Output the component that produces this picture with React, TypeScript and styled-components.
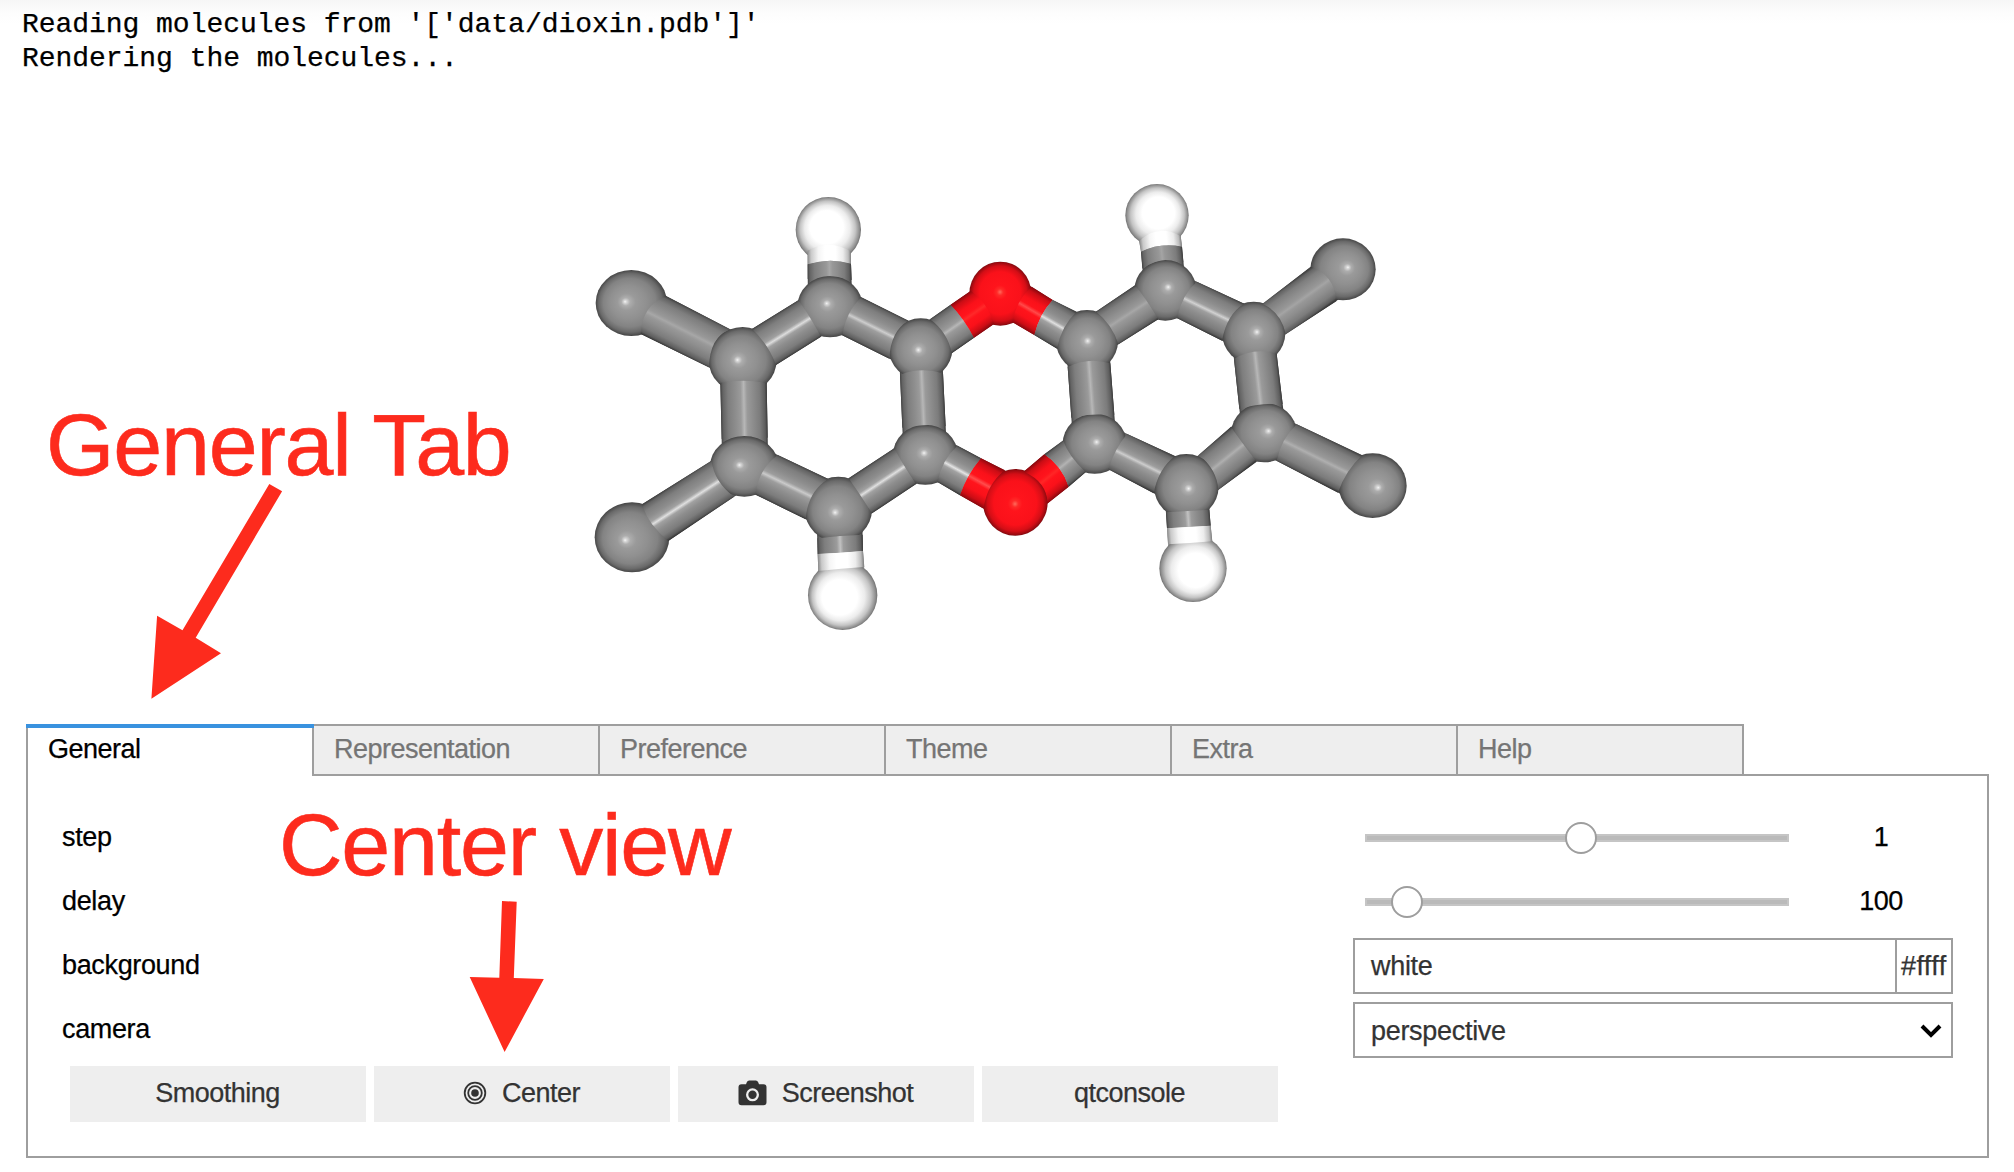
import React from "react";
import styled, { createGlobalStyle } from "styled-components";

const GlobalStyle = createGlobalStyle`
  *, *::before, *::after { box-sizing: border-box; }
  body {
    margin: 0;
    background: #fff;
    color: #000;
    font-family: "Liberation Sans", Arial, sans-serif;
    font-size: 27px;
    letter-spacing: -0.5px;
    -webkit-text-stroke-width: 0.25px;
    overflow: hidden;
  }
`;

const Page = styled.main`
  position: relative;
  width: 2014px;
  height: 1172px;
  display: flex;
  flex-direction: column;
  background: linear-gradient(#f6f6f6, #fdfdfd 14px, #fff 24px);
`;

const Output = styled.pre`
  margin: 0;
  height: 90px;
  padding: 8px 0 0 22px;
  font: 28px/34px "Liberation Mono", "Courier New", monospace;
  letter-spacing: -0.04px;
`;

const Viewer = styled.div`
  height: 634px;
`;

const Canvas = styled.svg`
  display: block;
`;

const Controls = styled.section`
  width: 1963px;
  margin-left: 26px;
`;

const TabBar = styled.div`
  display: flex;
  height: 50px;
`;

const Tab = styled.button<{ $active?: boolean }>`
  position: relative;
  z-index: ${(p) => (p.$active ? 1 : 0)};
  width: ${(p) => (p.$active ? 286 : 288)}px;
  height: ${(p) => (p.$active ? 52 : 50)}px;
  margin: 0 ${(p) => (p.$active ? 0 : -2)}px 0 0;
  padding: 0 0 ${(p) => (p.$active ? 4 : 2)}px 20px;
  border: 2px solid #9e9e9e;
  border-bottom: 0;
  border-right-width: ${(p) => (p.$active ? 0 : 2)}px;
  background: ${(p) => (p.$active ? "#fff" : "#eee")};
  color: ${(p) => (p.$active ? "#000" : "#757575")};
  font: inherit;
  letter-spacing: inherit;
  text-align: left;

  &::before {
    content: "";
    display: ${(p) => (p.$active ? "block" : "none")};
    position: absolute;
    top: -2px;
    left: -2px;
    width: 288px;
    height: 4px;
    background: #3992df;
  }
`;

const Panel = styled.div`
  height: 384px;
  border: 2px solid #9e9e9e;
  padding: 34px 34px 0;
`;

const Row = styled.div`
  display: flex;
  justify-content: space-between;
  height: 56px;
  margin-bottom: 8px;
`;

const Label = styled.label`
  line-height: 54px;
  letter-spacing: -0.35px;
`;

const Field = styled.div`
  display: flex;
  align-items: center;
  width: 600px;
`;

const Track = styled.div`
  flex: none;
  width: 424px;
  height: 8px;
  margin-left: 12px;
  border: 2px solid #c5c5c5;
  background: #bababa;
`;

const Thumb = styled.div`
  width: 32px;
  height: 32px;
  margin-top: -14px;
  border: 2px solid #9e9e9e;
  border-radius: 50%;
  background: #fff;
`;

const Readout = styled.span`
  flex: none;
  width: 144px;
  margin-left: 20px;
  line-height: 54px;
  padding-bottom: 2px;
  text-align: center;
`;

const Box = styled.div<{ $drop?: number }>`
  display: flex;
  align-items: center;
  justify-content: space-between;
  flex: 1;
  height: 56px;
  padding: ${(p) => p.$drop ?? 0}px 9px 0 16px;
  border: 2px solid #9e9e9e;
  color: #333;
  line-height: 50px;
  letter-spacing: -0.3px;
`;

const Swatch = styled.div`
  width: 56px;
  height: 56px;
  padding: 0 4px;
  border: 2px solid #9e9e9e;
  border-left: 0;
  color: #333;
  line-height: 53px;
  letter-spacing: 0.4px;
  white-space: nowrap;
`;

const Buttons = styled.div`
  display: flex;
  gap: 8px;
  padding-left: 8px;
`;

const Button = styled.button`
  display: flex;
  align-items: center;
  justify-content: center;
  width: 296px;
  height: 56px;
  padding: 0 1px 2px 0;
  border: 0;
  background: #eee;
  color: #333;
  font: inherit;
  letter-spacing: inherit;
`;

const Icon = styled.svg`
  display: block;
  margin-right: 15px;
`;

const Chevron = styled.svg`
  display: block;
`;

const Note = styled.span<{ $x: number; $y: number }>`
  position: absolute;
  left: ${(p) => p.$x}px;
  top: ${(p) => p.$y}px;
  color: #fd2b1d;
  font-size: 88px;
  letter-spacing: -1.2px;
  line-height: 100px;
  white-space: nowrap;
  -webkit-text-stroke-width: 0.6px;
`;

const Arrows = styled.svg`
  position: absolute;
  left: 0;
  top: 0;
  pointer-events: none;
`;

type Kind = "C" | "O" | "H";

// An atom: element, centre, radii, specular point.
type Atom = [Kind, number, number, number, number, number, number];

// A cut across a bond: two rim points and the point where the arc crosses the axis.
type Cut = [number, number, number, number, number, number];

interface Bond {
  cuts: Cut[];
  kinds: Kind[];
  shine: number;
}

const sphereStops: Record<Kind, [number, string][]> = {
  C: [[0, "#f6f6f6"], [0.04, "#d8d8d8"], [0.12, "#adadad"], [0.25, "#9a9a9a"], [0.5, "#909090"], [0.72, "#838383"], [0.87, "#6a6a6a"], [0.96, "#4c4c4c"], [1, "#343434"]],
  O: [[0, "#ff6a5c"], [0.1, "#ff2a28"], [0.22, "#ff141c"], [0.65, "#fa111a"], [0.84, "#d40e16"], [0.95, "#980a10"], [1, "#6a060a"]],
  H: [[0, "#fff"], [0.5, "#fff"], [0.68, "#ececec"], [0.83, "#c4c4c4"], [0.94, "#8e8e8e"], [1, "#646464"]],
};

const mix = (a: number, b: number, t: number) => Math.round(a + (b - a) * t);

function bondStops(kind: Kind, shine: number): [number, string][] {
  if (kind === "O") {
    const g = mix(20, 80, shine);
    return [[0, "#8a080e"], [0.1, "#cc0d15"], [0.28, "#fa111a"], [0.42, "#ff141c"], [0.5, `rgb(255,${g},${g})`], [0.58, "#ff141c"], [0.74, "#fa111a"], [0.9, "#cc0d15"], [1, "#8a080e"]];
  }
  if (kind === "H") {
    return [[0, "#8a8a8a"], [0.08, "#c9c9c9"], [0.25, "#f5f5f5"], [0.4, "#fff"], [0.65, "#fff"], [0.82, "#ececec"], [0.94, "#bdbdbd"], [1, "#808080"]];
  }
  const v = mix(156, 232, shine);
  const s = mix(150, 162, shine);
  return [[0, "#444"], [0.05, "#646464"], [0.16, "#7e7e7e"], [0.32, "#8e8e8e"], [0.43, `rgb(${s},${s},${s})`], [0.5, `rgb(${v},${v},${v})`], [0.57, `rgb(${s},${s},${s})`], [0.68, "#8e8e8e"], [0.84, "#7c7c7c"], [0.95, "#5e5e5e"], [1, "#3a3a3a"]];
}

const leftAtoms: Atom[] = [
  ["C", 154, 369, 107, 99, 135, 365],
  ["C", 488, 540, 102, 99, 472, 540],
  ["C", 750, 380, 98, 92, 740, 370],
  ["C", 1022, 507, 95, 92, 1015, 510],
  ["C", 1036, 824, 97, 90, 1032, 819],
  ["C", 493, 859, 103, 91, 478, 855],
  ["C", 775, 988, 101, 98, 765, 998],
  ["C", 156, 1072, 112, 105, 135, 1081],
  ["H", 745, 149, 98, 98, 735, 135],
  ["H", 788, 1246, 104, 104, 770, 1258],
  ["O", 1261, 341, 93, 96, 1260, 336],
  ["O", 1306, 967, 97, 100, 1305, 972],
];

const rightAtoms: Atom[] = [
  ["C", 321, 513, 93, 93, 323, 513],
  ["C", 344, 821, 96, 90, 350, 816],
  ["C", 556, 361, 93, 91, 565, 351],
  ["C", 821, 489, 95, 94, 831, 486],
  ["C", 852, 788, 98, 89, 866, 783],
  ["C", 619, 949, 97, 97, 626, 956],
  ["C", 1089, 298, 98, 93, 1104, 292],
  ["C", 1178, 947, 102, 97, 1195, 953],
  ["H", 531, 136, 95, 94, 540, 122],
  ["H", 639, 1195, 101, 101, 655, 1207],
];

const leftBonds: Bond[] = [
  { shine: 0.15, kinds: ["C"], cuts: [[258, 348, 182, 462, 203, 391], [450, 448, 387, 562, 404, 488]] },
  { shine: 0.35, kinds: ["C"], cuts: [[421, 609, 560, 609, 490, 602], [425, 777, 563, 773, 494, 767]] },
  { shine: 0.85, kinds: ["C"], cuts: [[516, 447, 588, 555, 558, 496], [655, 361, 723, 470, 685, 405]] },
  { shine: 0.65, kinds: ["C"], cuts: [[844, 352, 787, 466, 807, 402], [985, 422, 928, 536, 944, 466]] },
  { shine: 0.35, kinds: ["C"], cuts: [[960, 584, 1089, 580, 1024, 571], [967, 743, 1097, 739, 1032, 735]] },
  { shine: 0.35, kinds: ["C", "O"], cuts: [[1050, 418, 1115, 520, 1093, 463], [1112, 374, 1182, 473, 1150, 420], [1172, 333, 1242, 432, 1214, 374]] },
  { shine: 0.6, kinds: ["C"], cuts: [[593, 825, 527, 944, 547, 877], [745, 897, 677, 1018, 697, 946]] },
  { shine: 0.9, kinds: ["C"], cuts: [[395, 842, 462, 950, 415, 900], [187, 972, 265, 1083, 212, 1027]] },
  { shine: 0.9, kinds: ["C"], cuts: [[806, 895, 876, 1000, 841, 946], [943, 805, 1008, 912, 971, 855]] },
  { shine: 0.15, kinds: ["H", "C"], cuts: [[683, 212, 812, 214, 748, 194], [683, 253, 813, 251, 748, 242], [683, 297, 815, 300, 748, 288]] },
  { shine: 0.5, kinds: ["C", "H"], cuts: [[712, 1075, 848, 1064, 780, 1068], [713, 1122, 849, 1113, 781, 1118], [715, 1173, 853, 1161, 784, 1166]] },
  { shine: 0.95, kinds: ["C", "O"], cuts: [[1132, 797, 1073, 906, 1093, 847], [1203, 835, 1140, 946, 1166, 888], [1275, 871, 1211, 986, 1232, 920]] },
];

const rightBonds: Bond[] = [
  { shine: 0.9, kinds: ["O", "C"], cuts: [[155, 350, 97, 456, 118, 396], [218, 390, 163, 495, 184, 438], [290, 425, 231, 536, 252, 474]] },
  { shine: 0.35, kinds: ["C"], cuts: [[263, 591, 391, 580, 326, 573], [274, 743, 403, 734, 338, 734]] },
  { shine: 0.15, kinds: ["C"], cuts: [[348, 425, 415, 523, 389, 468], [465, 346, 535, 448, 498, 390]] },
  { shine: 0.1, kinds: ["H", "C"], cuts: [[477, 213, 602, 198, 537, 183], [483, 245, 606, 230, 543, 227], [487, 296, 610, 277, 547, 271]] },
  { shine: 0.7, kinds: ["C"], cuts: [[650, 335, 591, 444, 613, 382], [793, 401, 726, 512, 750, 444]] },
  { shine: 0.1, kinds: ["C"], cuts: [[848, 402, 917, 492, 893, 437], [992, 290, 1069, 394, 1047, 328]] },
  { shine: 0.35, kinds: ["C"], cuts: [[762, 567, 890, 552, 824, 545], [778, 717, 908, 702, 842, 704]] },
  { shine: 0.25, kinds: ["C"], cuts: [[950, 763, 890, 872, 912, 812], [1147, 856, 1074, 968, 1104, 906]] },
  { shine: 0.25, kinds: ["C"], cuts: [[657, 855, 715, 959, 698, 902], [753, 770, 830, 875, 786, 817]] },
  { shine: 0.65, kinds: ["C"], cuts: [[441, 792, 385, 897, 409, 840], [585, 858, 521, 970, 544, 905]] },
  { shine: 0.3, kinds: ["O", "C"], cuts: [[132, 905, 203, 1000, 184, 944], [193, 853, 266, 950, 237, 894], [250, 812, 317, 906, 274, 858]] },
  { shine: 0.5, kinds: ["C", "H"], cuts: [[558, 1027, 688, 1019, 623, 1023], [561, 1075, 692, 1067, 626, 1071], [564, 1123, 697, 1114, 630, 1119]] },
];

function AtomShape({ atom, id }: { atom: Atom; id: string }) {
  const [kind, cx, cy, rx, ry, hx, hy] = atom;
  return (
    <g>
      <radialGradient id={id} cx={0.5} cy={0.5} r={0.51} fx={0.5 + (hx - cx) / (2 * rx)} fy={0.5 + (hy - cy) / (2 * ry)}>
        {sphereStops[kind].map(([o, c]) => (
          <stop key={o} offset={o} stopColor={c} />
        ))}
      </radialGradient>
      <ellipse cx={cx} cy={cy} rx={rx} ry={ry} fill={`url(#${id})`} />
    </g>
  );
}

function control([x1, y1, x2, y2, mx, my]: Cut) {
  return [2 * mx - (x1 + x2) / 2, 2 * my - (y1 + y2) / 2];
}

function axis(cuts: Cut[]) {
  const first = cuts[0];
  const last = cuts[cuts.length - 1];
  const dx = (last[0] + last[2] - first[0] - first[2]) / 2;
  const dy = (last[1] + last[3] - first[1] - first[3]) / 2;
  const len = Math.hypot(dx, dy);
  return [dx / len, dy / len];
}

function BondShape({ bond, id }: { bond: Bond; id: string }) {
  const [ux, uy] = axis(bond.cuts);
  return (
    <g>
      {bond.kinds.map((kind, i) => {
        const a = bond.cuts[i];
        const b = bond.cuts[i + 1];
        const nx = -uy;
        const ny = ux;
        const w = ((a[2] - a[0]) * nx + (a[3] - a[1]) * ny + (b[2] - b[0]) * nx + (b[3] - b[1]) * ny) / 4;
        const mx = (a[0] + a[2] + b[0] + b[2]) / 4;
        const my = (a[1] + a[3] + b[1] + b[3]) / 4;
        const [ax, ay] = control(a);
        const [bx, by] = control(b);
        const gid = `${id}-${i}`;
        return (
          <g key={gid}>
            <linearGradient id={gid} gradientUnits="userSpaceOnUse" x1={mx - nx * w} y1={my - ny * w} x2={mx + nx * w} y2={my + ny * w}>
              {bondStops(kind, bond.shine).map(([o, c]) => (
                <stop key={o} offset={o} stopColor={c} />
              ))}
            </linearGradient>
            <path
              d={`M${a[0]} ${a[1]}Q${ax} ${ay} ${a[2]} ${a[3]}L${b[2]} ${b[3]}Q${bx} ${by} ${b[0]} ${b[1]}Z`}
              fill={`url(#${gid})`}
            />
          </g>
        );
      })}
    </g>
  );
}

// The same bond with both ends run on beneath the spheres they join.
function extended(bond: Bond): Bond {
  const [ux, uy] = axis(bond.cuts);
  const reach = 26;
  const shift = (c: Cut, s: number): Cut => [
    c[0] + ux * s, c[1] + uy * s, c[2] + ux * s, c[3] + uy * s, c[4] + ux * s, c[5] + uy * s,
  ];
  const end = bond.cuts.length - 1;
  return {
    ...bond,
    cuts: bond.cuts.map((c, i) => (i === 0 ? shift(c, -reach) : i === end ? shift(c, reach) : c)),
  };
}

function Molecule() {
  const third = 1 / 3;
  const left = `translate(580 90) scale(${third})`;
  const right = `translate(980 80) scale(${third})`;
  return (
    <Canvas width="2014" height="634" viewBox="0 0 2014 634">
      <g transform={left}>
        {leftBonds.map((b, i) => <BondShape key={i} bond={extended(b)} id={`lu${i}`} />)}
      </g>
      <g transform={right}>
        {rightBonds.map((b, i) => <BondShape key={i} bond={extended(b)} id={`ru${i}`} />)}
      </g>
      <g transform={left}>
        {leftAtoms.map((a, i) => <AtomShape key={i} atom={a} id={`la${i}`} />)}
      </g>
      <g transform={right}>
        {rightAtoms.map((a, i) => <AtomShape key={i} atom={a} id={`ra${i}`} />)}
      </g>
      <g transform={left}>
        {leftBonds.map((b, i) => <BondShape key={i} bond={b} id={`lb${i}`} />)}
      </g>
      <g transform={right}>
        {rightBonds.map((b, i) => <BondShape key={i} bond={b} id={`rb${i}`} />)}
      </g>
    </Canvas>
  );
}

function Slider({ position, value }: { position: number; value: number }) {
  return (
    <Field>
      <Track>
        <Thumb style={{ marginLeft: position }} />
      </Track>
      <Readout>{value}</Readout>
    </Field>
  );
}

const tabs = ["General", "Representation", "Preference", "Theme", "Extra", "Help"];

export default function App() {
  return (
    <Page>
      <GlobalStyle />
      <Output>{"Reading molecules from '['data/dioxin.pdb']'\nRendering the molecules..."}</Output>
      <Viewer>
        <Molecule />
      </Viewer>
      <Controls>
        <TabBar>
          {tabs.map((t, i) => (
            <Tab key={t} $active={i === 0}>{t}</Tab>
          ))}
        </TabBar>
        <Panel>
          <Row>
            <Label>step</Label>
            <Slider position={198} value={1} />
          </Row>
          <Row>
            <Label>delay</Label>
            <Slider position={24} value={100} />
          </Row>
          <Row>
            <Label>background</Label>
            <Field>
              <Box>white</Box>
              <Swatch>#ffff</Swatch>
            </Field>
          </Row>
          <Row>
            <Label>camera</Label>
            <Field>
              <Box $drop={1}>
                perspective
                <Chevron width="22" height="14" viewBox="0 0 22 14">
                  <path d="M2 2l9 9 9-9" fill="none" stroke="#000" strokeWidth="4" />
                </Chevron>
              </Box>
            </Field>
          </Row>
          <Buttons>
            <Button>Smoothing</Button>
            <Button>
              <Icon width="24" height="24" viewBox="0 0 24 24" fill="none" stroke="#333" strokeWidth="1.8">
                <circle cx="12" cy="12" r="10.3" />
                <circle cx="12" cy="12" r="6.8" />
                <circle cx="12" cy="12" r="3.8" fill="#333" stroke="none" />
              </Icon>
              Center
            </Button>
            <Button>
              <Icon width="29" height="26" viewBox="0 0 29 26">
                <path
                  fill="#333"
                  fillRule="evenodd"
                  d="M8.8 2.2Q9.500 .5 11.200 .5H17.800Q19.500 .5 20.200 2.200L21 4.200H25.500Q28.500 4.200 28.500 7.200V22.200Q28.500 25.200 25.500 25.200H3.500Q.5 25.200 .5 22.200V7.200Q.5 4.200 3.500 4.200H8ZM14.500 8.300a6.500 6.500 0 1 0 0 13a6.500 6.500 0 1 0 0-13ZM14.500 10.600a4.200 4.200 0 1 1 0 8.400a4.200 4.200 0 1 1 0-8.400Z"
                />
              </Icon>
              Screenshot
            </Button>
            <Button>qtconsole</Button>
          </Buttons>
        </Panel>
      </Controls>
      <Note $x={46} $y={395}>General Tab</Note>
      <Note $x={279} $y={795}>Center view</Note>
      <Arrows width="2014" height="1172" fill="#fd2b1d">
        <path d="M269.300 484L282.100 491.200L195.700 637.700L221 653.300L151.400 698.700L157.100 615.700L182.500 630.300Z" />
        <path d="M502 901L516.700 901.700L513.800 978L543.800 979L504.600 1052L469.700 977L499.300 977.700Z" />
      </Arrows>
    </Page>
  );
}
